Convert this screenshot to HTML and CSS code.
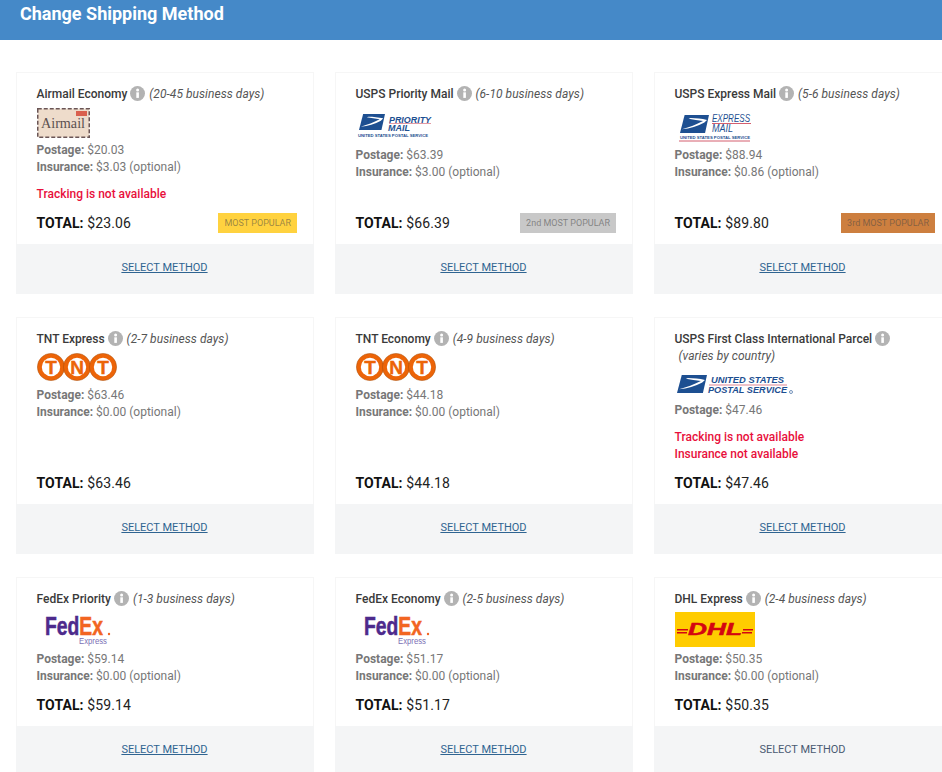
FILE: index.html
```html
<!DOCTYPE html>
<html lang="en">
<head>
<meta charset="utf-8">
<title>Change Shipping Method</title>
<link rel="stylesheet" href="styles.css">
</head>
<body>
<svg class="defs" width="0" height="0" aria-hidden="true">
  <defs>
    <symbol id="info" viewBox="0 0 15 15">
      <circle cx="7.5" cy="7.5" r="7.5" fill="#b3b3b3"/>
      <rect x="6.3" y="6.3" width="2.6" height="5.6" fill="#fff"/>
      <circle cx="7.6" cy="4" r="1.5" fill="#fff"/>
    </symbol>
    <symbol id="eagle" viewBox="0 0 44 24" preserveAspectRatio="none">
      <path d="M7 0H44L38 24H0Z" fill="#1d4f91"/>
      <path d="M3 19C15 16 24 13 35 8C28 7 20 6 13 5L16 4C24 4 33 5 41 6.500L37 10C27 15 15 18 3 19Z" fill="#fff"/>
    </symbol>
    <symbol id="tnt" viewBox="0 0 80 28">
      <g fill="#ec6408" stroke="#a8500f" stroke-width="0.500">
        <circle cx="14" cy="14" r="13.600"/>
        <circle cx="40" cy="14" r="13.600"/>
        <circle cx="66" cy="14" r="13.600"/>
      </g>
      <g fill="#fff">
        <circle cx="14" cy="14" r="9.200"/>
        <circle cx="40" cy="14" r="9.200"/>
        <circle cx="66" cy="14" r="9.200"/>
      </g>
      <g class="tnt-letter" text-anchor="middle">
        <text x="14" y="20.500">T</text>
        <text x="40" y="20.500">N</text>
        <text x="66" y="20.500">T</text>
      </g>
    </symbol>
  </defs>
</svg>

<header class="page-header"><h1 class="page-title">Change Shipping Method</h1></header>

<main class="methods">

  <section class="card">
    <div class="card-body">
      <h2 class="name">Airmail Economy <svg class="info"><use href="#info"/></svg> <em class="days">(20-45 business days)</em></h2>
      <svg class="logo logo-airmail" viewBox="0 0 53 30">
        <rect x="0.750" y="0.750" width="51.500" height="28.500" fill="#eedccb" stroke="#6a5555" stroke-width="1.500" stroke-dasharray="4 2"/>
        <rect x="39" y="3" width="11" height="5" fill="#d9604e"/>
        <text x="4" y="20" class="airmail-word" textLength="44" lengthAdjust="spacingAndGlyphs">Airmail</text>
      </svg>
      <p class="line"><b>Postage:</b> $20.03</p>
      <p class="line"><b>Insurance:</b> $3.03 (optional)</p>
      <div class="warnings"><p class="warn">Tracking is not available</p></div>
      <div class="total-row">
        <p class="total"><b>TOTAL:</b> $23.06</p>
        <span class="badge badge-gold">MOST POPULAR</span>
      </div>
    </div>
    <div class="card-foot"><a class="select" href="#">SELECT METHOD</a></div>
  </section>

  <section class="card">
    <div class="card-body">
      <h2 class="name">USPS Priority Mail <svg class="info"><use href="#info"/></svg> <em class="days">(6-10 business days)</em></h2>
      <svg class="logo logo-usps" viewBox="0 0 90 35">
        <use href="#eagle" x="3" y="6" width="26" height="16"/>
        <text x="33" y="15" class="usps-word" textLength="42" lengthAdjust="spacingAndGlyphs">PRIORITY</text>
        <path d="M33 15.500H75" stroke="#c9364a" stroke-width="0.500"/>
        <text x="32" y="23" class="usps-word" textLength="22" lengthAdjust="spacingAndGlyphs">MAIL</text>
        <text x="2" y="28.500" class="usps-small" textLength="70" lengthAdjust="spacingAndGlyphs">UNITED STATES POSTAL SERVICE</text>
      </svg>
      <p class="line"><b>Postage:</b> $63.39</p>
      <p class="line"><b>Insurance:</b> $3.00 (optional)</p>
      <div class="total-row">
        <p class="total"><b>TOTAL:</b> $66.39</p>
        <span class="badge badge-silver">2nd MOST POPULAR</span>
      </div>
    </div>
    <div class="card-foot"><a class="select" href="#">SELECT METHOD</a></div>
  </section>

  <section class="card">
    <div class="card-body">
      <h2 class="name">USPS Express Mail <svg class="info"><use href="#info"/></svg> <em class="days">(5-6 business days)</em></h2>
      <svg class="logo logo-usps" viewBox="0 0 90 35">
        <use href="#eagle" x="5" y="7" width="29" height="18"/>
        <text x="37" y="14" class="usps-word usps-thin" textLength="38" lengthAdjust="spacingAndGlyphs">EXPRESS</text>
        <path d="M37 15.500H76" stroke="#c9364a" stroke-width="0.800"/>
        <text x="37" y="24" class="usps-word usps-thin" textLength="21" lengthAdjust="spacingAndGlyphs">MAIL</text>
        <text x="5" y="31" class="usps-small" textLength="70" lengthAdjust="spacingAndGlyphs">UNITED STATES POSTAL SERVICE</text>
        <path d="M4 33H75" stroke="#c9364a" stroke-width="0.800"/>
      </svg>
      <p class="line"><b>Postage:</b> $88.94</p>
      <p class="line"><b>Insurance:</b> $0.86 (optional)</p>
      <div class="total-row">
        <p class="total"><b>TOTAL:</b> $89.80</p>
        <span class="badge badge-bronze">3rd MOST POPULAR</span>
      </div>
    </div>
    <div class="card-foot"><a class="select" href="#">SELECT METHOD</a></div>
  </section>

  <section class="card">
    <div class="card-body">
      <h2 class="name">TNT Express <svg class="info"><use href="#info"/></svg> <em class="days">(2-7 business days)</em></h2>
      <svg class="logo logo-tnt"><use href="#tnt"/></svg>
      <p class="line"><b>Postage:</b> $63.46</p>
      <p class="line"><b>Insurance:</b> $0.00 (optional)</p>
      <div class="total-row">
        <p class="total"><b>TOTAL:</b> $63.46</p>
      </div>
    </div>
    <div class="card-foot"><a class="select" href="#">SELECT METHOD</a></div>
  </section>

  <section class="card">
    <div class="card-body">
      <h2 class="name">TNT Economy <svg class="info"><use href="#info"/></svg> <em class="days">(4-9 business days)</em></h2>
      <svg class="logo logo-tnt"><use href="#tnt"/></svg>
      <p class="line"><b>Postage:</b> $44.18</p>
      <p class="line"><b>Insurance:</b> $0.00 (optional)</p>
      <div class="total-row">
        <p class="total"><b>TOTAL:</b> $44.18</p>
      </div>
    </div>
    <div class="card-foot"><a class="select" href="#">SELECT METHOD</a></div>
  </section>

  <section class="card">
    <div class="card-body">
      <h2 class="name">USPS First Class International Parcel <svg class="info"><use href="#info"/></svg><br><em class="days days-wrapped">(varies by country)</em></h2>
      <svg class="logo logo-usps-wide" viewBox="0 0 120 28">
        <use href="#eagle" x="2" y="5" width="30" height="18"/>
        <text x="36" y="13" class="usps-word" textLength="73" lengthAdjust="spacingAndGlyphs">UNITED STATES</text>
        <path d="M34 15H112" stroke="#c9364a" stroke-width="0.600"/>
        <text x="33" y="23" class="usps-word" textLength="79" lengthAdjust="spacingAndGlyphs">POSTAL SERVICE</text>
        <circle cx="116" cy="22" r="1.500" fill="none" stroke="#1d4f91" stroke-width="0.600"/>
      </svg>
      <p class="line"><b>Postage:</b> $47.46</p>
      <div class="warnings">
        <p class="warn">Tracking is not available</p>
        <p class="warn">Insurance not available</p>
      </div>
      <div class="total-row">
        <p class="total"><b>TOTAL:</b> $47.46</p>
      </div>
    </div>
    <div class="card-foot"><a class="select" href="#">SELECT METHOD</a></div>
  </section>

  <section class="card">
    <div class="card-body">
      <h2 class="name">FedEx Priority <svg class="info"><use href="#info"/></svg> <em class="days">(1-3 business days)</em></h2>
      <svg class="logo logo-wide" viewBox="0 0 80 35">
        <text x="8" y="23" class="fedex-word" textLength="58" lengthAdjust="spacingAndGlyphs"><tspan class="fedex-fed">Fed</tspan><tspan class="fedex-ex">Ex</tspan></text>
        <circle cx="72" cy="22" r="1.200" fill="#f26522"/>
        <text x="42" y="31.500" class="fedex-sub" textLength="28" lengthAdjust="spacingAndGlyphs">Express</text>
      </svg>
      <p class="line"><b>Postage:</b> $59.14</p>
      <p class="line"><b>Insurance:</b> $0.00 (optional)</p>
      <div class="total-row">
        <p class="total"><b>TOTAL:</b> $59.14</p>
      </div>
    </div>
    <div class="card-foot"><a class="select" href="#">SELECT METHOD</a></div>
  </section>

  <section class="card">
    <div class="card-body">
      <h2 class="name">FedEx Economy <svg class="info"><use href="#info"/></svg> <em class="days">(2-5 business days)</em></h2>
      <svg class="logo logo-wide" viewBox="0 0 80 35">
        <text x="8" y="23" class="fedex-word" textLength="58" lengthAdjust="spacingAndGlyphs"><tspan class="fedex-fed">Fed</tspan><tspan class="fedex-ex">Ex</tspan></text>
        <circle cx="72" cy="22" r="1.200" fill="#f26522"/>
        <text x="42" y="31.500" class="fedex-sub" textLength="28" lengthAdjust="spacingAndGlyphs">Express</text>
      </svg>
      <p class="line"><b>Postage:</b> $51.17</p>
      <p class="line"><b>Insurance:</b> $0.00 (optional)</p>
      <div class="total-row">
        <p class="total"><b>TOTAL:</b> $51.17</p>
      </div>
    </div>
    <div class="card-foot"><a class="select" href="#">SELECT METHOD</a></div>
  </section>

  <section class="card">
    <div class="card-body">
      <h2 class="name">DHL Express <svg class="info"><use href="#info"/></svg> <em class="days">(2-4 business days)</em></h2>
      <svg class="logo logo-wide" viewBox="0 0 80 35">
        <rect width="80" height="35" fill="#ffcc00"/>
        <g fill="#d40511">
          <rect x="2" y="17" width="11" height="1.500"/>
          <rect x="2" y="20" width="10" height="1.500"/>
          <rect x="68" y="17" width="10" height="1.500"/>
          <rect x="67" y="20" width="10" height="1.500"/>
        </g>
        <text x="13" y="23" class="dhl-word" textLength="54" lengthAdjust="spacingAndGlyphs">DHL</text>
      </svg>
      <p class="line"><b>Postage:</b> $50.35</p>
      <p class="line"><b>Insurance:</b> $0.00 (optional)</p>
      <div class="total-row">
        <p class="total"><b>TOTAL:</b> $50.35</p>
      </div>
    </div>
    <div class="card-foot"><a class="select select-plain" href="#">SELECT METHOD</a></div>
  </section>

</main>
</body>
</html>
```
FILE: styles.css
```css
* { box-sizing: border-box; }
html, body { margin: 0; height: 100%; overflow: hidden; background: #fff; }
body { font-family: Roboto, "Liberation Sans", sans-serif; color: #777; font-size: 12px; }
.defs { position: absolute; }

.page-header { height: 40px; background: #4589c8; padding: 0 20px; }
.page-title { margin: 0; color: #fff; font-size: 18px; font-weight: 700; line-height: 27px; }

.methods {
  display: grid;
  grid-template-columns: repeat(3, 298px);
  column-gap: 21px;
  row-gap: 23px;
  padding: 32px 0 0 16px;
}

.card { display: flex; flex-direction: column; border: 1px solid #f6f6f6; }
.card-body { flex: 1; display: flex; flex-direction: column; padding: 13px 16px 11px 19.500px; }
.card-foot { height: 50px; margin: 0 -1px -1px; background: #f4f5f6; display: flex; align-items: center; justify-content: center; padding: 0 1px 4px 0; }

.name { margin: 0; font-size: 12px; line-height: 17px; font-weight: 500; color: #3a3a3a; }
.info { width: 15px; height: 15px; vertical-align: -3px; margin: 0 1px 0 0; }
.days { font-weight: 400; color: #555; letter-spacing: 0.050px; }
.days-wrapped { margin-left: 4px; }

.logo { display: block; margin: 5px 0 4px; }
.logo-airmail { width: 53px; height: 30px; }
.logo-usps { width: 90px; height: 35px; }
.logo-usps-wide { width: 120px; height: 28px; }
.logo-tnt { width: 80px; height: 28px; margin-bottom: 6px; }
.logo-wide { width: 80px; height: 35px; margin-top: 4px; }

.airmail-word { font-family: "Liberation Serif", serif; font-size: 14.500px; fill: #5a5050; }
.usps-word { font-family: "Liberation Sans", sans-serif; font-style: italic; font-weight: 700; font-size: 9.500px; fill: #1d4f91; }
.usps-thin { font-weight: 400; font-size: 10px; }
.usps-small { font-family: "Liberation Sans", sans-serif; font-weight: 700; font-size: 3.800px; fill: #1d4f91; }
.tnt-letter { font-family: "Liberation Sans", sans-serif; font-weight: 700; font-size: 19px; fill: #ec6408; stroke: #ec6408; stroke-width: 0.400; }
.fedex-word { font-family: "Liberation Sans", sans-serif; font-weight: 700; font-size: 25px; stroke-width: 0.500; }
.fedex-fed { fill: #4d2a8c; stroke: #4d2a8c; }
.fedex-ex { fill: #f26522; stroke: #f26522; }
.fedex-sub { font-family: "Liberation Sans", sans-serif; font-size: 9px; fill: #7a6fb5; }
.dhl-word { font-family: "Liberation Sans", sans-serif; font-style: italic; font-weight: 700; font-size: 17px; fill: #d40511; stroke: #d40511; stroke-width: 0.500; }

.line { margin: 0; line-height: 17px; color: #777; }
.line b { font-weight: 700; }

.warnings { margin-top: 10px; }
.warn { margin: 0; line-height: 17px; font-weight: 500; color: #e8103c; }

.total-row { margin-top: auto; padding-top: 10px; display: flex; align-items: center; justify-content: space-between; min-height: 30px; }
.total { margin: 0; font-size: 14px; line-height: 18px; color: #222; letter-spacing: 0.100px; }
.total b { font-weight: 700; color: #111; }

.badge { height: 20px; line-height: 20px; padding: 0 6px; font-size: 9px; color: rgba(70, 70, 70, 0.55); white-space: nowrap; }
.badge-gold { background: #ffd23f; }
.badge-silver { background: #c8c8c8; }
.badge-bronze { background: #cd7f3f; }

.select { color: #2f6491; text-decoration: underline; font-size: 11px; }
.select-plain { color: #4a5a72; text-decoration: none; }
```
